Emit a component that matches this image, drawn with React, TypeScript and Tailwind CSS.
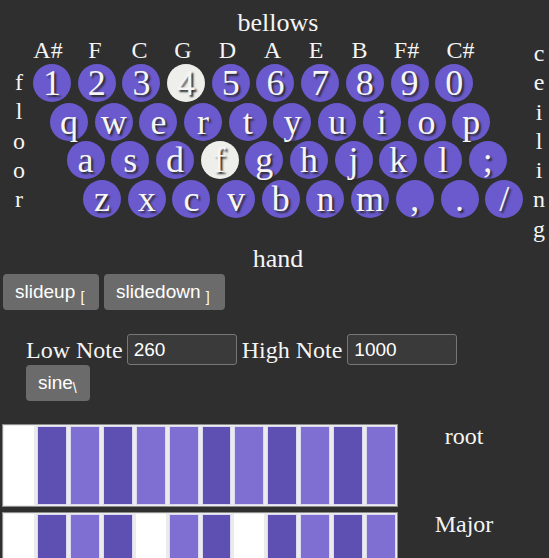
import React from "react";

const serif = "font-['Liberation_Serif','Times_New_Roman',serif]";
const sans = "font-['Liberation_Sans',Arial,sans-serif]";

// note names above the number row, each box sized to sit over its key
const notes = [
  { n: "A#", w: "w-[48px]" },
  { n: "F", w: "w-[46px]" },
  { n: "C", w: "w-[43px]" },
  { n: "G", w: "w-[44px]" },
  { n: "D", w: "w-[45px]" },
  { n: "A", w: "w-[45px]" },
  { n: "E", w: "w-[42px]" },
  { n: "B", w: "w-[45px]" },
  { n: "F#", w: "w-[49px]" },
  { n: "C#", w: "w-[59px]" },
];

const keyRows = [
  { pad: "pl-[9px]", keys: "1234567890" },
  { pad: "pl-[26px]", keys: "qwertyuiop" },
  { pad: "pl-[42.5px]", keys: "asdfghjkl;" },
  { pad: "pl-[59px]", keys: "zxcvbnm,./" },
];

const pressed = ["4", "f"];

// W = off, D = dark, L = light
const scales = [
  { name: "root", cells: "WDLDLLDLDLDL" },
  { name: "Major", cells: "WDLDWLDWDLDL" },
];

function Key({ k }: { k: string }) {
  const on = pressed.includes(k);
  return (
    <div
      className={
        "w-[38px] h-[38px] shrink-0 rounded-full flex items-center justify-center text-[36px] leading-none text-[#f5f5f5] [text-shadow:2px_2px_2px_#2a2a2a] " +
        (on ? "bg-[#eeeeea]" : "bg-[#6a5acd]")
      }
    >
      {k}
    </div>
  );
}

function Cell({ c }: { c: string }) {
  if (c === "W") return <div className="flex-1 bg-white border border-white" />;
  if (c === "D") return <div className="flex-1 bg-[#5e4fb3] border border-[#dcdaf0]" />;
  return <div className="flex-1 bg-[#7f6fd3] border border-[#dcdaf0]" />;
}

export default function App() {
  return (
    <div className={`min-h-screen bg-[#2f2f2f] text-[#f5f5f5] text-[24px] leading-[28px] ${serif}`}>
      <div className="flex items-start">
        {/* floor */}
        <div className="w-[24px] shrink-0 pl-[13px] mt-[68px] leading-[29.3px]">
          {"floor".split("").map((ch, i) => (
            <div key={i} className="w-[12px] text-center">
              {ch}
            </div>
          ))}
        </div>

        <div className="w-[508px] shrink-0 pt-[9px]">
          <div className="text-center text-[26px] h-[27px]">bellows</div>
          <div className="flex">
            {notes.map((n) => (
              <div key={n.n} className={`${n.w} shrink-0 text-center`}>
                {n.n}
              </div>
            ))}
          </div>
          <div className="flex flex-col gap-[0.7px]">
            {keyRows.map((r, i) => (
              <div key={i} className={`flex gap-[6.7px] ${r.pad}`}>
                {r.keys.split("").map((k) => (
                  <Key key={k} k={k} />
                ))}
              </div>
            ))}
          </div>
          <div className="text-center text-[26px] mt-[27px] h-[27px]">hand</div>
        </div>

        {/* ceiling */}
        <div className="w-[14px] shrink-0 mt-[39px] leading-[29.3px]">
          {"ceiling".split("").map((ch, i) => (
            <div key={i} className="text-center">
              {ch}
            </div>
          ))}
        </div>
      </div>

      <div className={`flex gap-[5px] pl-[3px] mt-[2px] ${sans} text-[19px]`}>
        <button className="w-[96px] h-[36px] rounded-[4px] bg-[#6b6b6b] text-white text-left pl-[12px]">
          slideup <sub>[</sub>
        </button>
        <button className="w-[121px] h-[36px] rounded-[4px] bg-[#6b6b6b] text-white text-left pl-[12px]">
          slidedown <sub>]</sub>
        </button>
      </div>

      <div className="pl-[26px] mt-[24px]">
        <div className="flex items-center">
          <span>Low Note</span>
          <input
            defaultValue="260"
            className={`ml-[4px] w-[110px] h-[31px] rounded-[3px] border border-[#767676] bg-[#3a3a3a] px-[6px] text-[19px] text-white outline-none ${sans}`}
          />
          <span className="ml-[5px]">High Note</span>
          <input
            defaultValue="1000"
            className={`ml-[5px] w-[110px] h-[31px] rounded-[3px] border border-[#767676] bg-[#3a3a3a] px-[6px] text-[19px] text-white outline-none ${sans}`}
          />
        </div>
        <button
          className={`w-[64px] h-[36px] rounded-[4px] bg-[#6b6b6b] text-white text-left pl-[12px] text-[19px] ${sans}`}
        >
          sine<sub>\</sub>
        </button>
      </div>

      <div className="mt-[23px] flex flex-col gap-[5px]">
        {scales.map((s) => (
          <div key={s.name} className="flex items-start">
            <div className="ml-[2px] w-[396px] h-[83px] shrink-0 border border-[#8c8c8c] bg-[#ebebeb] p-[1px] flex gap-[3px]">
              {s.cells.split("").map((c, i) => (
                <Cell key={i} c={c} />
              ))}
            </div>
            <div className="w-[132px] text-center -mt-[2px]">{s.name}</div>
          </div>
        ))}
      </div>
    </div>
  );
}
